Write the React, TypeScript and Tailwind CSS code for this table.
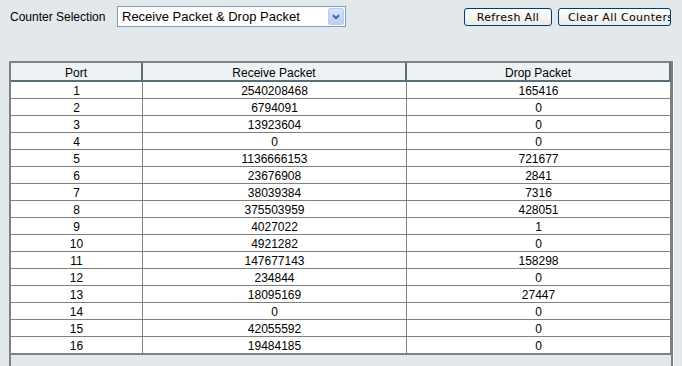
const rows: [number, string, string][] = [
  [1, "2540208468", "165416"],
  [2, "6794091", "0"],
  [3, "13923604", "0"],
  [4, "0", "0"],
  [5, "1136666153", "721677"],
  [6, "23676908", "2841"],
  [7, "38039384", "7316"],
  [8, "375503959", "428051"],
  [9, "4027022", "1"],
  [10, "4921282", "0"],
  [11, "147677143", "158298"],
  [12, "234844", "0"],
  [13, "18095169", "27447"],
  [14, "0", "0"],
  [15, "42055592", "0"],
  [16, "19484185", "0"],
]

function SelectBox() {
  return (
    <div className="flex items-center w-[229px] h-[21px] border border-[#7f9db9] bg-white">
      <span className="flex-1 pl-[4px] text-[13px] leading-none text-black whitespace-nowrap">
        Receive Packet &amp; Drop Packet
      </span>
      <div className="flex items-center justify-center w-[16px] h-[17px] mr-[1px] rounded-[2px] border border-[#b8cbf6] bg-linear-to-b from-[#d6e2fd] to-[#bccffb]">
        <svg width="8" height="6" viewBox="0 0 8 6">
          <path d="M1 1.2 L4 4.2 L7 1.2" fill="none" stroke="#4d6185" strokeWidth="2" />
        </svg>
      </div>
    </div>
  )
}

function XpButton({ label, className }: { label: string; className: string }) {
  return (
    <button
      className={`h-[18px] rounded-[3px] border border-[#003c74] bg-linear-to-b from-white to-[#ecebe6] font-['DejaVu_Sans',Verdana,sans-serif] text-[11px] leading-none tracking-[0.35px] text-black whitespace-nowrap overflow-hidden ${className}`}
    >
      {label}
    </button>
  )
}

export default function App() {
  return (
    <div className="w-[682px] h-[366px] overflow-hidden bg-[#e3e8eb] font-['Liberation_Sans',Arial,sans-serif] text-black">
      <div className="flex items-center h-[33px] pl-[10px] pr-[11px]">
        <span className="w-[107px] text-[12px] leading-none">Counter Selection</span>
        <SelectBox />
        <div className="ml-auto flex gap-[6px] mt-[1px]">
          <XpButton label="Refresh All" className="w-[88px] text-center" />
          <XpButton label="Clear All Counters" className="w-[113px] text-left pl-[9px]" />
        </div>
      </div>

      <div className="mt-[28px] ml-[9px] w-[664px] h-[320px] border-l-2 border-t-2 border-r-2 border-[#808080] shadow-[1px_0_0_#ffffff]">
        <div className="flex h-[19px] bg-[#edf2f4] border-b-2 border-[#5b6e78] text-[12px]">
          <div className="w-[132px] pt-[2px] border-r-2 border-[#5b6e78] flex items-center justify-center">Port</div>
          <div className="w-[264px] pt-[2px] border-r-2 border-[#5b6e78] flex items-center justify-center">Receive Packet</div>
          <div className="w-[264px] pt-[2px] border-r-2 border-[#5b6e78] flex items-center justify-center">Drop Packet</div>
        </div>
        <div className="bg-white border-b border-[#808080]">
          {rows.map(([port, rx, drop]) => (
            <div key={port} className="flex h-[17px] border-b border-[#808080] text-[12px]">
              <div className="w-[132px] pt-[1px] border-r border-[#808080] flex items-center justify-center">{port}</div>
              <div className="w-[264px] pt-[1px] border-r border-[#808080] flex items-center justify-center">{rx}</div>
              <div className="w-[264px] pt-[1px] border-r border-[#808080] flex items-center justify-center">{drop}</div>
            </div>
          ))}
        </div>
      </div>
    </div>
  )
}
